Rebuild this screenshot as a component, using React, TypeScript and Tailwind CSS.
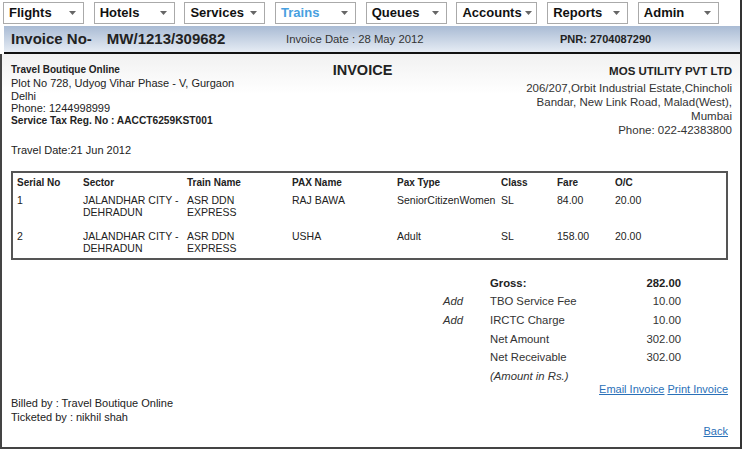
const menus = ['Flights', 'Hotels', 'Services', 'Trains', 'Queues', 'Accounts', 'Reports', 'Admin'];

const rows = [
  { sn: '1', sector: ['JALANDHAR CITY -', 'DEHRADUN'], train: ['ASR DDN', 'EXPRESS'], pax: 'RAJ BAWA', type: 'SeniorCitizenWomen', cls: 'SL', fare: '84.00', oc: '20.00' },
  { sn: '2', sector: ['JALANDHAR CITY -', 'DEHRADUN'], train: ['ASR DDN', 'EXPRESS'], pax: 'USHA', type: 'Adult', cls: 'SL', fare: '158.00', oc: '20.00' },
];

const totals = [
  { add: '', label: 'Gross:', value: '282.00', bold: true },
  { add: 'Add', label: 'TBO Service Fee', value: '10.00' },
  { add: 'Add', label: 'IRCTC Charge', value: '10.00' },
  { add: '', label: 'Net Amount', value: '302.00' },
  { add: '', label: 'Net Receivable', value: '302.00' },
];

function Caret() {
  return (
    <svg width="7" height="4" viewBox="0 0 7 4" className="shrink-0">
      <path d="M0 0h7L3.5 4z" fill="#666" />
    </svg>
  );
}

export default function App() {
  return (
    <div className="w-[750px] h-[449px] bg-white text-[11px] text-[#222] overflow-hidden font-['Liberation_Sans',Arial,sans-serif]">
      <div className="w-[742px] h-[449px] border-r-2 border-[#333] flex flex-col">
        {/* Top menu */}
        <div className="flex gap-[9.7px] pl-[3px] pt-[2px] h-[26px] shrink-0">
          {menus.map((m) => (
            <div
              key={m}
              className="w-[81px] h-[22px] border border-[#aaa] bg-white flex items-center justify-between gap-[3px] pl-[5px] pr-[7px]"
            >
              <span className={`font-bold text-[13px] ${m === 'Trains' ? 'text-[#48a0e0]' : 'text-[#111]'}`}>{m}</span>
              <Caret />
            </div>
          ))}
        </div>

        {/* Invoice header bar */}
        <div className="ml-[4px] h-[28px] shrink-0 bg-gradient-to-b from-[#a9bbd4] to-[#e6ecf4] flex items-center border-b-2 border-[#111]">
          <div className="w-[282px] pl-[7px] font-bold text-[15px] text-[#222]">
            Invoice No-<span className="ml-[15px]">MW/1213/309682</span>
          </div>
          <div className="w-[274px] text-[11.3px] text-[#333]">Invoice Date : 28 May 2012</div>
          <div className="font-bold text-[11px] text-[#222]">PNR: 2704087290</div>
        </div>

        {/* Body */}
        <div className="flex-1 border-l-2 border-b-2 border-[#444] bg-gradient-to-b from-[#f1f1f1] to-white to-[40px] pl-[9px] pr-[12px] pt-[10px] flex flex-col">
          <div className="flex justify-between">
            <div className="w-[320px] leading-[12.75px]">
              <div className="font-bold text-[10px]">Travel Boutique Online</div>
              <div>Plot No 728, Udyog Vihar Phase - V, Gurgaon</div>
              <div>Delhi</div>
              <div>Phone: 1244998999</div>
              <div className="font-bold text-[10.2px]">Service Tax Reg. No : AACCT6259KST001</div>
            </div>
            <div className="font-bold text-[14.5px] leading-[12px] -ml-[18px]">INVOICE</div>
            <div className="w-[320px] text-right text-[11.5px] leading-[14px] text-[#333] -mr-[4px]">
              <div className="font-bold text-[#222] mb-[3px]">MOS UTILITY PVT LTD</div>
              <div>206/207,Orbit Industrial Estate,Chincholi</div>
              <div>Bandar, New Link Road, Malad(West),</div>
              <div>Mumbai</div>
              <div>Phone: 022-42383800</div>
            </div>
          </div>

          <div className="mt-[7px] leading-[13px]">Travel Date:21 Jun 2012</div>

          {/* Passenger table */}
          <div className="mt-[14px] w-[717px] border-2 border-[#555] text-[10.5px]">
            <table className="border-separate border-spacing-0 table-fixed w-full">
              <colgroup>
                <col className="w-[70px]" />
                <col className="w-[104px]" />
                <col className="w-[105px]" />
                <col className="w-[105px]" />
                <col className="w-[104px]" />
                <col className="w-[56px]" />
                <col className="w-[58px]" />
                <col />
              </colgroup>
              <thead>
                <tr className="text-left">
                  {['Serial No', 'Sector', 'Train Name', 'PAX Name', 'Pax Type', 'Class', 'Fare', 'O/C'].map((h, i) => (
                    <th key={h} className={`font-bold text-[10px] h-[18px] p-0 align-middle ${i === 0 ? 'pl-[4px]' : ''}`}>{h}</th>
                  ))}
                </tr>
              </thead>
              <tbody className="leading-[12px]">
                {rows.map((r, idx) => {
                  const pad = idx === rows.length - 1 ? 'pt-[3px] pb-[4px]' : 'pt-[3px] pb-[9px]';
                  return (
                    <tr key={r.sn} className="align-top">
                      <td className={`pl-[4px] ${pad}`}>{r.sn}</td>
                      <td className={pad}>{r.sector[0]}<br />{r.sector[1]}</td>
                      <td className={pad}>{r.train[0]}<br />{r.train[1]}</td>
                      <td className={pad}>{r.pax}</td>
                      <td className={`${pad} whitespace-nowrap`}>{r.type}</td>
                      <td className={pad}>{r.cls}</td>
                      <td className={pad}>{r.fare}</td>
                      <td className={pad}>{r.oc}</td>
                    </tr>
                  );
                })}
              </tbody>
            </table>
          </div>

          {/* Totals */}
          <div className="mt-[14px] ml-[432px] w-[238px] text-[11.3px] grid grid-cols-[47px_1fr_80px] auto-rows-[18.6px] items-center">
            {totals.map((t) => (
              <div key={t.label} className="contents">
                <div className="italic text-[#333]">{t.add}</div>
                <div className={t.bold ? 'font-bold' : 'text-[#333]'}>{t.label}</div>
                <div className={`text-right ${t.bold ? 'font-bold' : 'text-[#333]'}`}>{t.value}</div>
              </div>
            ))}
            <div />
            <div className="italic text-[#333] col-span-2">(Amount in Rs.)</div>
          </div>

          <div className="flex justify-end gap-[3px] -mt-[4px] leading-[14px]">
            <a href="#" className="text-[#2a70b8] underline">Email Invoice</a>
            <a href="#" className="text-[#2a70b8] underline">Print Invoice</a>
          </div>

          <div className="leading-[14px] text-[#222]">
            <div>Billed by : Travel Boutique Online</div>
            <div>Ticketed by : nikhil shah</div>
          </div>

          <div className="flex justify-end leading-[14px]">
            <a href="#" className="text-[#2a70b8] underline">Back</a>
          </div>
        </div>
      </div>
    </div>
  );
}
